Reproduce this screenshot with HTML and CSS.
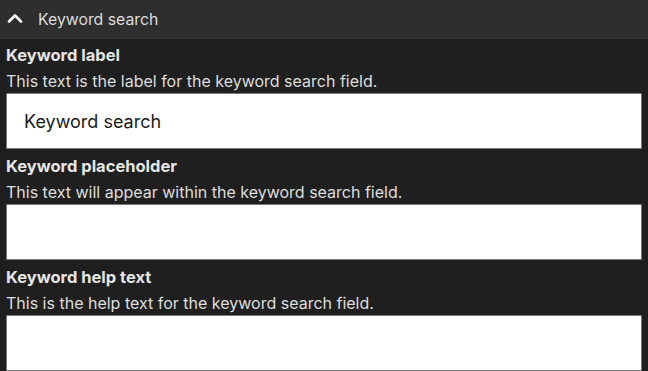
FILE: index.html
```html
<!DOCTYPE html>
<html lang="en">
  <head>
    <meta charset="UTF-8" />
    <meta name="viewport" content="width=device-width, initial-scale=1.0" />
    <title>Keyword search</title>
    <link rel="stylesheet" href="styles.css">
  </head>
  <body>
    <div class="panel">
      <div class="panel-header">
        <svg class="chevron" width="16" height="10" viewBox="0 0 16 10">
          <path d="M2 8.5 L8 2.5 L14 8.5" fill="none" stroke="#fff" stroke-width="2.6" stroke-linecap="round" stroke-linejoin="round" />
        </svg>
        <span class="panel-title">Keyword search</span>
      </div>

      <div class="panel-body">
        <div class="field">
          <label class="field-label" for="kwLabel">Keyword label</label>
          <p class="field-help">This text is the label for the keyword search field.</p>
          <input type="text" id="kwLabel" class="field-input" value="Keyword search" />
        </div>
        <div class="field">
          <label class="field-label" for="kwPlaceholder">Keyword placeholder</label>
          <p class="field-help">This text will appear within the keyword search field.</p>
          <input type="text" id="kwPlaceholder" class="field-input" />
        </div>
        <div class="field">
          <label class="field-label" for="kwHelp">Keyword help text</label>
          <p class="field-help">This is the help text for the keyword search field.</p>
          <input type="text" id="kwHelp" class="field-input" />
        </div>
      </div>
    </div>
  </body>
</html>
```

FILE: styles.css
```css
body {
  font-family: Inter, "Noto Sans", sans-serif;
  margin: 0;
  padding: 0;
  background-color: #1f1f1f;
  color: #e4e4e4;
}
.panel-header {
  height: 38px;
  display: flex;
  align-items: center;
  background-color: #2e2e2e;
  border-bottom: 1px solid #353535;
  padding-left: 7px;
}
.chevron {
  margin-right: 15px;
  margin-top: -2px;
}
.panel-title {
  font-size: 15.8px;
  color: #dcdcdc;
}
.panel-body {
  padding: 5px 6px 0 6px;
}
.field {
  padding-bottom: 6px;
}
.field-label {
  display: block;
  font-size: 16.5px;
  font-weight: 700;
  line-height: 22px;
  color: #e6e6e6;
}
.field-help {
  margin: 4px 0 1px 0;
  font-size: 16px;
  line-height: 22px;
  color: #dedede;
}
.field-input {
  display: block;
  width: 100%;
  height: 56px;
  box-sizing: border-box;
  border: 1px solid #7a7a7a;
  border-radius: 1px;
  background-color: #fff;
  padding: 0 17px;
  font-family: Inter, "Noto Sans", sans-serif;
  font-size: 18px;
  color: #1a1a1a;
}
```
